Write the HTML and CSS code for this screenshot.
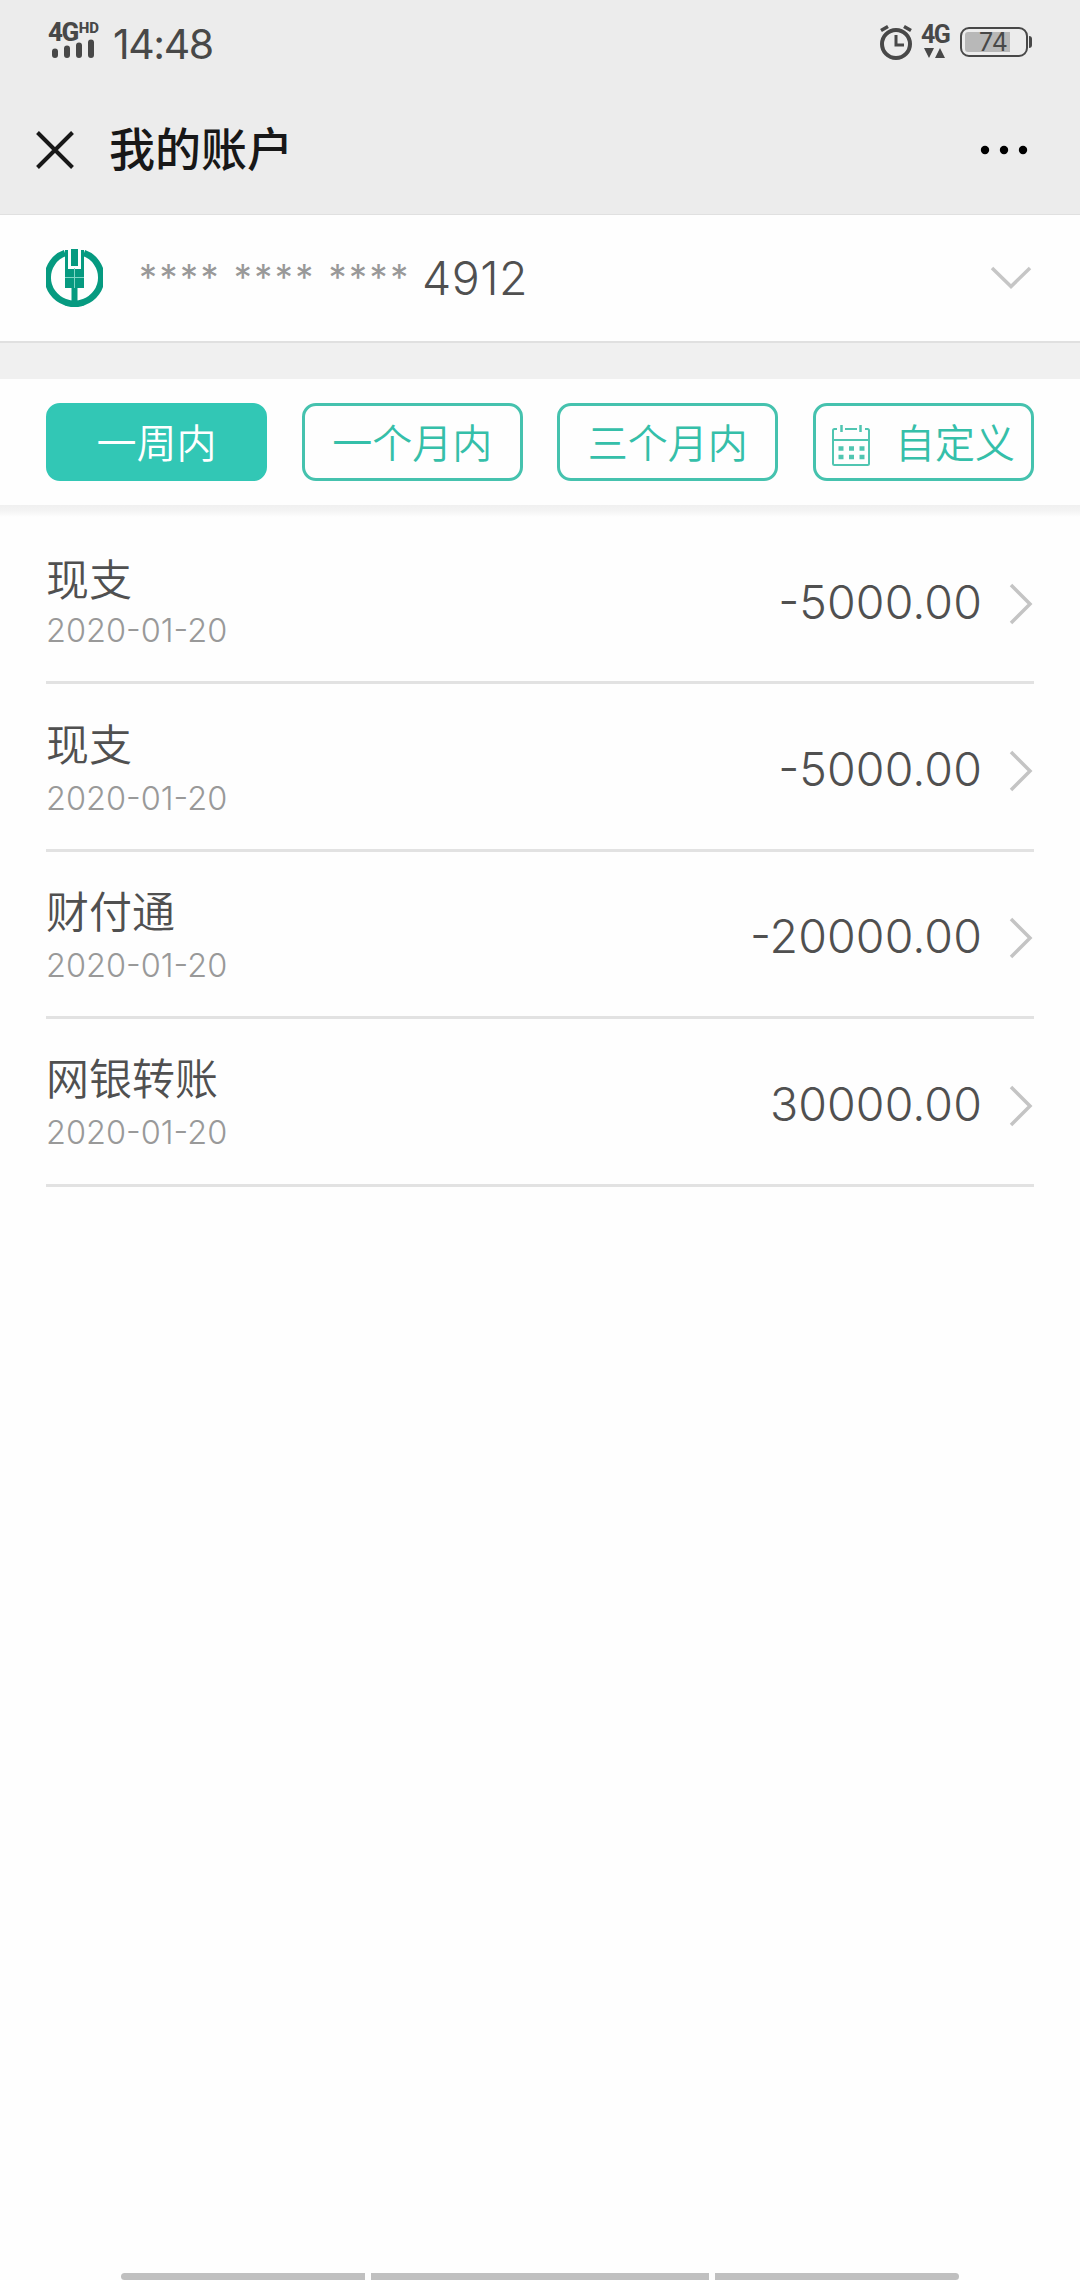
FILE: index.html
```html
<!DOCTYPE html>
<html lang="zh-CN">
<head>
<meta charset="utf-8">
<title>我的账户</title>
<link rel="stylesheet" href="styles.css">
</head>
<body>
<header class="top">
  <div class="status">
    <div class="signal">
      <div class="net">4G<span class="hd">HD</span></div>
      <svg class="bars" width="44" height="20" viewBox="0 0 44 20"><path d="M4 12.500V16M16 9.500V16M28 6.500V16M40 3.500V16" stroke="#484848" stroke-width="6" stroke-linecap="round"/></svg>
    </div>
    <div class="clock">14:48</div>
    <svg class="alarm" width="34" height="38" viewBox="0 0 34 38" fill="none" stroke="#484848"><circle cx="17" cy="21" r="14" stroke-width="4"/><path d="M17 12v10h8" stroke-width="3"/><path d="M2 7.500l7-4M32 7.500l-7-4" stroke-width="3.500"/></svg>
    <div class="data">
      <div class="data-label">4G</div>
      <svg width="22" height="11" viewBox="0 0 22 11" fill="#484848"><path d="M0 0h10L5 10zM11 10h10L16 0z"/></svg>
    </div>
    <div class="battery"><div class="level"></div><span class="percent">74</span></div>
    <div class="nub"></div>
  </div>
  <div class="nav">
    <svg class="close" width="38" height="38" viewBox="0 0 38 38"><path d="M1.500 1.500l35 35M36.500 1.500l-35 35" stroke="#181818" stroke-width="4"/></svg>
    <h1 class="title">我的账户</h1>
    <svg class="more" width="48" height="10" viewBox="0 0 48 10"><circle cx="5" cy="5" r="4.200"/><circle cx="24" cy="5" r="4.200"/><circle cx="43" cy="5" r="4.200"/></svg>
  </div>
</header>
<section class="account">
  <svg class="logo" width="57" height="58" viewBox="0 0 57 58"><path d="M19 4A26 26 0 0 0 19 53Q28.500 57 38 53A26 26 0 0 0 38 4" fill="none" stroke="#069a80" stroke-width="6.500"/><path d="M19 1h3v19h13V1h3v38h-6.500v13l6 1v4h-18v-4l6-1V39H19z" fill="#069a80"/><path d="M25 0h7v17h-7z" fill="#069a80"/><path d="M28.500 19v20M19 28.500h19" stroke="#7fd6c5" stroke-width="1"/></svg>
  <div class="number"><span class="mask">**** **** ****</span><span class="tail">4912</span></div>
  <svg class="down" width="42" height="24" viewBox="0 0 42 24"><path d="M2 2l19 18.500L40 2" fill="none" stroke="#c6c6c6" stroke-width="3.500"/></svg>
</section>
<div class="divider"></div>
<nav class="tabs">
  <div class="tab active">一周内</div>
  <div class="tab">一个月内</div>
  <div class="tab">三个月内</div>
  <div class="tab custom">
    <svg width="40" height="42" viewBox="0 0 40 42" fill="none" stroke="#50c5b1" stroke-width="2"><path d="M6 4H3.500Q2 4 2 5.500V38.500Q2 40 3.500 40H36.500Q38 40 38 38.500V5.500Q38 4 36.500 4H34M14 4H26M2 15H38"/><path d="M10.500 0V7M29.500 0V7" stroke-width="2.500"/><path d="M7.500 23.500h5M18 23.500h5M28.500 23.500h5M7.500 32h5M18 32h5M28.500 32h5" stroke-width="4.500"/></svg>
    <span>自定义</span>
  </div>
</nav>
<main class="list">
  <div class="row first"><div class="info"><div class="name">现支</div><div class="date">2020-01-20</div></div><div class="amount">-5000.00</div><svg class="go" width="24" height="42" viewBox="0 0 24 42"><path d="M2 2l19 19L2 40"/></svg></div>
  <div class="row"><div class="info"><div class="name">现支</div><div class="date">2020-01-20</div></div><div class="amount">-5000.00</div><svg class="go" width="24" height="42" viewBox="0 0 24 42"><path d="M2 2l19 19L2 40"/></svg></div>
  <div class="row"><div class="info"><div class="name">财付通</div><div class="date">2020-01-20</div></div><div class="amount">-20000.00</div><svg class="go" width="24" height="42" viewBox="0 0 24 42"><path d="M2 2l19 19L2 40"/></svg></div>
  <div class="row"><div class="info"><div class="name">网银转账</div><div class="date">2020-01-20</div></div><div class="amount">30000.00</div><svg class="go" width="24" height="42" viewBox="0 0 24 42"><path d="M2 2l19 19L2 40"/></svg></div>
</main>
<footer class="gesture"><i class="side left"></i><i class="mid"></i><i class="side right"></i></footer>
</body>
</html>
```
FILE: styles.css
```css
* { box-sizing: border-box; }
body {
  margin: 0;
  width: 1080px;
  height: 2280px;
  display: flex;
  flex-direction: column;
  background: #fefefe;
  font-family: Inter, "Noto Sans CJK SC", sans-serif;
  font-weight: 300;
  color: #505050;
  overflow: hidden;
}
svg { display: block; flex: none; }
.top { height: 215px; background: #ececec; border-bottom: 1px solid #e0e0e0; }
.status { display: flex; height: 86px; padding-left: 48px; align-items: flex-start; color: #484848; }
.signal { width: 62px; padding-top: 21px; }
.net { display: flex; height: 18px; font: 800 26px/22px Roboto, sans-serif; letter-spacing: -1.5px; }
.hd { font-size: 15px; line-height: 14px; letter-spacing: 0; margin-left: 1px; }
.bars { margin-left: 3px; }
.clock { font: 400 41px/50px Inter, sans-serif; margin: 19px auto 0 3px; letter-spacing: -1.4px; }
.alarm { margin: 23px 0 0; }
.data { width: 34px; margin: 23px 0 0 8px; }
.data-label { height: 25px; font: 700 25px/23px Roboto, sans-serif; letter-spacing: -1.5px; }
.data svg { margin-left: 3px; }
.battery { position: relative; width: 68px; height: 30px; margin: 27px 0 0 5px; border: 2px solid #484848; border-radius: 9px; }
.level { width: 45px; height: 20px; margin: 3px; background: #b8b8b8; border-radius: 3px 0 0 3px; }
.percent { position: absolute; left: 17px; top: 0; font: 400 25px/26px Inter, sans-serif; }
.nub { width: 3px; height: 12px; margin: 36px 48px 0 1px; background: #484848; border-radius: 0 3px 3px 0; }
.nav { display: flex; height: 128px; padding: 0 52px 0 36px; align-items: center; }
.title { margin: 0 auto 8px 35px; font: 500 46px/60px "Noto Sans CJK SC", sans-serif; color: #181818; }
.account { display: flex; align-items: center; height: 128px; padding: 0 48px 0 46px; border-bottom: 2px solid #e0e0e0; }
.logo { margin-bottom: 1px; }
.number { display: flex; align-items: center; margin: 0 auto 0 36px; }
.mask { width: 283px; margin-bottom: 3px; color: #999; font-size: 36px; font-weight: 400; line-height: 56px; letter-spacing: 2.5px; white-space: nowrap; }
.tail { margin-bottom: 1px; font-size: 46.5px; line-height: 56px; letter-spacing: 0.5px; }
.divider { height: 36px; background: #f0f0f0; }
.tabs { display: flex; justify-content: space-between; align-items: flex-start; height: 126px; padding: 24px 46px 0; }
.tab { display: flex; align-items: center; justify-content: center; width: 221px; height: 78px; padding-top: 3px; border: 3px solid #45c2ae; border-radius: 14px; color: #35bfa9; font-size: 40px; font-weight: 350; line-height: 58px; white-space: nowrap; }
.active { background: #32c7b5; border-color: #32c7b5; color: #fff; }
.custom { justify-content: space-between; padding: 3px 16px 0 15px; }
.custom svg { margin-top: 4px; }
.list { padding: 12px 46px 0; background: linear-gradient(#f0f0f0, #f4f4f4 6px, #fefefe 12px); }
.row { display: flex; align-items: center; height: 167.400px; border-bottom: 3px solid #e2e2e2; }
.info { flex: 1; padding-top: 4px; }
.name { margin-bottom: 2px; font-size: 43px; font-weight: 350; line-height: 58px; }
.first .info { padding-top: 7px; }
.first .name { margin-bottom: -1px; }
.date { font-size: 32.500px; line-height: 46px; color: #999; font-feature-settings: "case"; }
.amount { padding-top: 5px; font-size: 46.500px; line-height: 56px; font-feature-settings: "case"; letter-spacing: 0.1px; }
.go { margin: 9px 1px 0 27px; }
.go path { fill: none; stroke: #c4c4c4; stroke-width: 3.5; }
.gesture { display: flex; gap: 6px; height: 7px; margin: auto 121px 0; }
.gesture i { background: #c0c0c0; }
.side { width: 244px; }
.mid { flex: 1; }
.left { border-radius: 4px 0 0 4px; }
.right { border-radius: 0 4px 4px 0; }
```
